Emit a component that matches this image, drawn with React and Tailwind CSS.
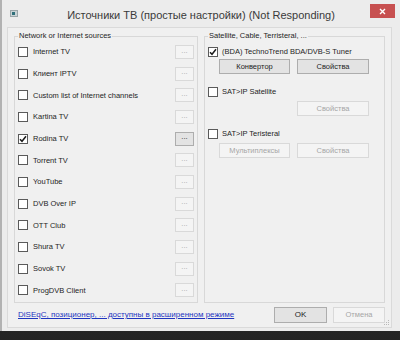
import React from 'react';

const font = { fontFamily: '"Liberation Sans", Arial, sans-serif' };

const networkSources = [
  { name: 'Internet TV' },
  { name: 'Клиент IPTV' },
  { name: 'Custom list of Internet channels' },
  { name: 'Kartina TV' },
  { name: 'Rodina TV', checked: true },
  { name: 'Torrent TV' },
  { name: 'YouTube' },
  { name: 'DVB Over IP' },
  { name: 'OTT Club' },
  { name: 'Shura TV' },
  { name: 'Sovok TV' },
  { name: 'ProgDVB Client' },
];

function CheckBox({ checked }) {
  return (
    <span className="w-[10px] h-[10px] shrink-0 border border-[#5a5a5a] bg-white flex items-center justify-center">
      {checked && (
        <svg width="8" height="8" viewBox="0 0 8 8">
          <path d="M1 4.2 L3 6.3 L7 1.3" fill="none" stroke="#1a1a1a" strokeWidth="1.5" />
        </svg>
      )}
    </span>
  );
}

function WinButton({ children, disabled, className = '' }) {
  return (
    <button
      className={
        'flex items-center justify-center text-[7.5px] leading-none border ' +
        (disabled
          ? 'border-[#d9d9d9] bg-[#f4f4f4] text-[#a6a6a6] '
          : 'border-[#adadad] bg-[#e3e3e3] text-[#1e1e1e] ') +
        className
      }
    >
      {children}
    </button>
  );
}

function GroupBox({ title, className = '', children }) {
  return (
    <fieldset className={'border border-[#d8d8d8] h-[272px] min-w-0 ' + className}>
      <legend className="ml-[3px] px-[1px] text-[7.5px] leading-[10px] text-[#1e1e1e]">{title}</legend>
      {children}
    </fieldset>
  );
}

export default function App() {
  return (
    <div className="w-[400px] h-[340px] bg-gradient-to-b from-[#474747] to-[#242424] overflow-hidden" style={font}>
      <div className="h-[331px] bg-[#ececec] border-l-[2px] border-[#b2b2b2] flex flex-col">
        {/* title bar */}
        <div className="h-[27px] grid grid-cols-[1fr_auto_1fr]">
          <div className="flex items-start pt-[10px] pl-[8px]">
            <div className="w-[8px] h-[7px] bg-[#c9d3d6] border border-[#9aa5a8] flex items-center pl-[1px]">
              <div className="w-[3px] h-[3px] bg-[#2f6f7a]" />
            </div>
          </div>
          <div className="flex items-center pt-[3px] text-[11px] text-[#3a3a3a]">
            Источники ТВ (простые настройки) (Not Responding)
          </div>
          <div className="flex justify-end items-start pt-[4px] pr-[5px]">
            <div className="w-[25px] h-[14px] bg-[#c75050] flex items-center justify-center">
              <svg width="7" height="7" viewBox="0 0 7 7">
                <path d="M1 1 L6 6 M6 1 L1 6" stroke="#fff" strokeWidth="1.4" />
              </svg>
            </div>
          </div>
        </div>

        {/* client area */}
        <div className="relative ml-[5px] w-[385px] h-[301px] bg-[#f0f0f0] border border-[#dadada] px-[6px] pt-[3px]">
          <div className="flex gap-[6px]">
            <GroupBox title="Network or Internet sources" className="w-[184px]">
              <div className="flex flex-col">
                {networkSources.map((s) => (
                  <div key={s.name} className="h-[21.7px] flex items-center pl-[3px] pr-[3px]">
                    <CheckBox checked={s.checked} />
                    <span className="ml-[5px] flex-1 text-[7.5px] text-[#1e1e1e] whitespace-nowrap">{s.name}</span>
                    <WinButton disabled={!s.checked} className="w-[19px] h-[14px] pb-[3px]">
                      ...
                    </WinButton>
                  </div>
                ))}
              </div>
            </GroupBox>

            <GroupBox title="Satellite, Cable, Terristeral, ..." className="w-[181px]">
              <div className="flex flex-col pl-[3px]">
                <div className="h-[14px] mt-[4px] flex items-center">
                  <CheckBox checked />
                  <span className="ml-[4px] text-[7.5px] text-[#1e1e1e] whitespace-nowrap">
                    (BDA) TechnoTrend BDA/DVB-S Tuner
                  </span>
                </div>
                <div className="flex gap-[7px] ml-[11px] mt-[0px]">
                  <WinButton className="w-[71px] h-[15px]">Конвертор</WinButton>
                  <WinButton className="w-[72px] h-[15px]">Свойства</WinButton>
                </div>

                <div className="h-[14px] mt-[11px] flex items-center">
                  <CheckBox />
                  <span className="ml-[4px] text-[7.5px] text-[#1e1e1e]">SAT&gt;IP Satellite</span>
                </div>
                <div className="flex gap-[7px] ml-[11px] mt-[2px]">
                  <div className="w-[71px]" />
                  <WinButton disabled className="w-[72px] h-[15px]">Свойства</WinButton>
                </div>

                <div className="h-[14px] mt-[11px] flex items-center">
                  <CheckBox />
                  <span className="ml-[4px] text-[7.5px] text-[#1e1e1e]">SAT&gt;IP Teristeral</span>
                </div>
                <div className="flex gap-[7px] ml-[11px] mt-[2px]">
                  <WinButton disabled className="w-[71px] h-[15px]">Мультиплексы</WinButton>
                  <WinButton disabled className="w-[72px] h-[15px]">Свойства</WinButton>
                </div>
              </div>
            </GroupBox>
          </div>

          <div className="mt-[4px] h-[16px] flex items-center">
            <a href="#" className="ml-[4px] flex-1 text-[8px] text-[#1f35c0] underline whitespace-nowrap">
              DiSEqC, позиционер, ... доступны в расширенном режиме
            </a>
            <WinButton className="w-[53px] h-[16px] text-[8px]">OK</WinButton>
            <WinButton disabled className="ml-[6px] w-[52px] h-[16px]">Отмена</WinButton>
          </div>

          <svg className="absolute right-[1px] bottom-[1px]" width="6" height="6" viewBox="0 0 6 6">
            <rect x="4" y="0" width="1" height="1" fill="#b8b8b8" />
            <rect x="2" y="2" width="1" height="1" fill="#b8b8b8" />
            <rect x="4" y="2" width="1" height="1" fill="#b8b8b8" />
            <rect x="0" y="4" width="1" height="1" fill="#b8b8b8" />
            <rect x="2" y="4" width="1" height="1" fill="#b8b8b8" />
            <rect x="4" y="4" width="1" height="1" fill="#b8b8b8" />
          </svg>
        </div>
      </div>
    </div>
  );
}
